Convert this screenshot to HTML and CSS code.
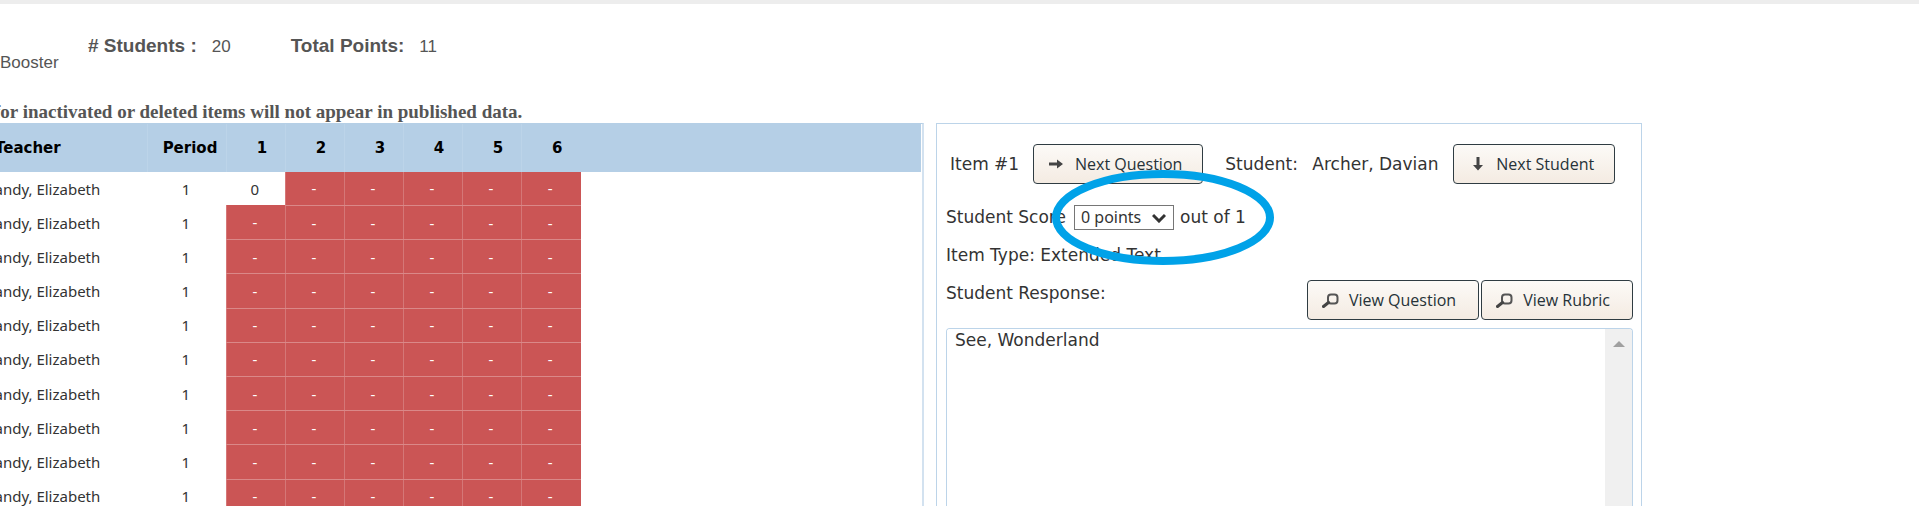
FILE: index.html
```html
<!DOCTYPE html>
<html lang="en">
<head>
  <meta charset="UTF-8">
  <meta name="viewport" content="width=device-width, initial-scale=1.0">
  <title>Student Scores</title>
  <link rel="stylesheet" href="styles.css">
</head>
<body>

  <div class="page">

    <div class="summary">
      <span class="test-name">Booster</span>
      <span class="summary-label">#&nbsp;Students :</span>
      <span class="summary-value students-value">20</span>
      <span class="summary-label">Total Points:</span>
      <span class="summary-value">11</span>
    </div>

    <p class="notice">for inactivated or deleted items will not appear in published data.</p>

    <div class="workspace">

      <div class="scores">
        <table class="score-table">
          <thead>
            <tr>
              <th class="teacher">Teacher</th>
              <th class="period">Period</th>
              <th>1</th><th>2</th><th>3</th><th>4</th><th>5</th><th>6</th>
              <th class="filler"></th>
            </tr>
          </thead>
          <tbody id="scoreRows">
          </tbody>
        </table>
      </div>

      <div class="response">
        <div class="item-row">
          <span class="item-number">Item #1</span>
          <button type="button" class="btn">
            <svg width="14" height="12" viewBox="0 0 14 12"><path d="M0 4.500h8V1.500l6 4.500-6 4.500V7.500H0z" fill="#444"/></svg>
            Next Question
          </button>
          <span class="student-label">Student:</span>
          <span class="student-name">Archer, Davian</span>
          <button type="button" class="btn btn-student">
            <svg width="12" height="14" viewBox="0 0 12 14"><path d="M4.500 0h3v8h3.500l-5 5.500-5-5.500h3.500z" fill="#444"/></svg>
            Next Student
          </button>
        </div>

        <div class="score-row">
          <label for="studentScore" class="score-label">Student Score</label>
          <div class="select-wrap">
            <select id="studentScore" class="score-select">
              <option>0 points</option>
              <option>1 points</option>
            </select>
            <svg class="chevron" width="14" height="10" viewBox="0 0 14 10"><path d="M1 2l6 6 6-6" fill="none" stroke="#333" stroke-width="3"/></svg>
          </div>
          <span>out of 1</span>
          <svg class="highlight" width="222" height="95" viewBox="0 0 222 95"><ellipse cx="111" cy="47.5" rx="107" ry="43.5" fill="none" stroke="#00a2e8" stroke-width="8"/></svg>
        </div>

        <div class="type-row">Item Type: Extended Text</div>

        <div class="response-row">
          <label for="studentResponse">Student Response:</label>
          <div class="view-buttons">
            <button type="button" class="btn btn-view">
              <svg width="17" height="15" viewBox="0 0 17 15"><rect x="6" y="1.5" width="9.5" height="9" rx="3" fill="none" stroke="#555" stroke-width="2"/><path d="M6.500 9.500L1.500 13.500" stroke="#444" stroke-width="3" stroke-linecap="round"/></svg>
              View Question
            </button>
            <button type="button" class="btn btn-view">
              <svg width="17" height="15" viewBox="0 0 17 15"><rect x="6" y="1.5" width="9.5" height="9" rx="3" fill="none" stroke="#555" stroke-width="2"/><path d="M6.500 9.500L1.500 13.500" stroke="#444" stroke-width="3" stroke-linecap="round"/></svg>
              View Rubric
            </button>
          </div>
        </div>

        <div class="response-box">
          <textarea id="studentResponse" class="response-text" readonly>See, Wonderland</textarea>
          <div class="scroll-track">
            <svg width="12" height="6" viewBox="0 0 12 6"><path d="M0 6l6-6 6 6z" fill="#a0a0a0"/></svg>
          </div>
        </div>
      </div>

    </div>

  </div>

  <script>
    var rows = document.getElementById('scoreRows');

    for (var i = 0; i < 10; i++) {
      var html = '<td class="teacher">andy, Elizabeth</td><td class="period">1</td>';
      for (var q = 0; q < 6; q++) {
        // only the first answer has been scored
        if (i === 0 && q === 0) {
          html += '<td class="scored">0</td>';
        } else {
          html += '<td class="unscored">-</td>';
        }
      }
      rows.innerHTML += '<tr>' + html + '<td class="filler"></td></tr>';
    }
  </script>

</body>
</html>
```
FILE: styles.css
```css
* {
  box-sizing: border-box;
}

body {
  margin: 0;
  height: 100vh;
  overflow: hidden;
  background-color: #fff;
  color: #333;
  font-family: Verdana, 'DejaVu Sans', sans-serif;
  font-size: 17px;
}

.page {
  display: flex;
  flex-direction: column;
  height: 100%;
  margin-left: -8px;
  padding-right: 277px;
  border-top: 4px solid #ededed;
}

.summary {
  display: flex;
  align-items: baseline;
  height: 96px;
  padding: 32px 0 0 8px;
  color: #555;
  font-family: Arial, 'Liberation Sans', sans-serif;
  font-size: 17px;
  line-height: 20px;
}

.test-name {
  width: 88px;
  padding-top: 17px;
  align-self: flex-start;
}

.summary-label {
  font-size: 19px;
  font-weight: bold;
}

.summary-value {
  margin-left: 15px;
}

.students-value {
  margin-right: 60px;
}

.notice {
  margin: 0;
  padding-left: 2px;
  height: 23px;
  color: #555;
  font-family: 'Times New Roman', 'Liberation Serif', serif;
  font-size: 19px;
  font-weight: bold;
  line-height: 24px;
  white-space: nowrap;
}

.workspace {
  display: grid;
  grid-template-columns: minmax(0, 1fr) 706px;
  gap: 12px;
  flex: 1;
  min-height: 0;
}

/* score table */

.scores {
  overflow: hidden;
  border-top: 1px solid #b5cfe6;
  border-right: 2px solid #d3e2f0;
  padding-right: 1px;
}

.score-table {
  width: 100%;
  height: 390px;
  border-collapse: collapse;
  table-layout: fixed;
  font-family: Tahoma, 'Noto Sans', sans-serif;
  font-size: 15px;
}

.score-table th,
.score-table td {
  width: 59px;
  padding: 0 2px 0 0;
  text-align: center;
}

.score-table th {
  height: 48px;
  padding-left: 14px;
  background-color: #b5cfe6;
  border-left: 1px solid #bcd4e9;
  color: #000;
  font-family: Verdana, 'DejaVu Sans', sans-serif;
  font-weight: bold;
}

.score-table .teacher {
  width: 155px;
  padding-left: 2px;
  text-align: left;
}

.score-table .period {
  width: 79px;
}

.score-table th.period {
  padding-left: 8px;
}

.score-table .filler {
  width: auto;
  border-left: 0;
}

.score-table .unscored {
  background-color: #cb5555;
  border-left: 1px solid #d57777;
  border-bottom: 1px solid #da8888;
  color: #fff;
}

/* response panel */

.response {
  display: flex;
  flex-direction: column;
  padding: 20px 8px 0 9px;
  border: 1px solid #bcd4e9;
  border-bottom: 0;
}

.item-row {
  display: flex;
  align-items: center;
  height: 40px;
  padding-left: 4px;
  white-space: nowrap;
}

.item-number {
  width: 83px;
}

.student-label {
  margin-left: 22px;
  width: 87px;
}

.student-name {
  width: 141px;
}

.btn {
  display: flex;
  align-items: center;
  gap: 12px;
  height: 40px;
  padding: 0 20px 0 15px;
  border: 1px solid #2f3c42;
  border-radius: 4px;
  background: linear-gradient(#fcfaf7, #f4ebe2);
  color: #263238;
  font-family: 'Open Sans', sans-serif;
  font-size: 16px;
  white-space: nowrap;
  cursor: pointer;
}

.btn-student {
  padding-left: 18px;
}

.btn-view {
  gap: 10px;
  padding: 0 22px 0 14px;
}

.score-row {
  position: relative;
  display: flex;
  align-items: center;
  gap: 6px;
  height: 26px;
  margin-top: 20px;
}

.score-label {
  width: 122px;
}

.select-wrap {
  position: relative;
}

.score-select {
  width: 100px;
  height: 25px;
  padding: 0 6px;
  appearance: none;
  border: 1px solid #767676;
  border-radius: 0;
  background-color: #fff;
  color: #333;
  font-family: Tahoma, 'Noto Sans', sans-serif;
  font-size: 16px;
}

.chevron {
  position: absolute;
  top: 8px;
  right: 8px;
  pointer-events: none;
}

.highlight {
  position: absolute;
  top: -34px;
  left: 106px;
  pointer-events: none;
}

.type-row {
  height: 20px;
  margin-top: 15px;
  line-height: 20px;
}

.response-row {
  display: flex;
  justify-content: space-between;
  height: 63px;
  padding-top: 18px;
  line-height: 20px;
}

.view-buttons {
  display: flex;
  gap: 2px;
  align-self: flex-end;
  margin-bottom: 8px;
}

.response-box {
  display: flex;
  flex: 1;
  overflow: hidden;
  border: 1px solid #bcd4e9;
  border-bottom: 0;
  border-radius: 4px 4px 0 0;
}

.response-text {
  flex: 1;
  padding: 1px 8px;
  border: 0;
  outline: 0;
  resize: none;
  color: #333;
  font-family: Verdana, 'DejaVu Sans', sans-serif;
  font-size: 17px;
  line-height: 21px;
}

.scroll-track {
  display: flex;
  justify-content: center;
  width: 27px;
  padding-top: 12px;
  background-color: #f0f0f0;
}
```
